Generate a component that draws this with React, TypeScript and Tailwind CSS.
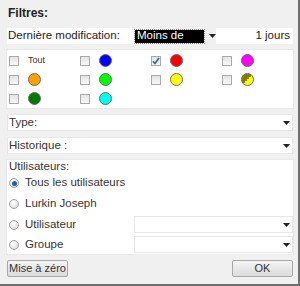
import React from 'react';

const colors: { key: string; cls: string }[][] = [
  [
    { key: 'tout', cls: '' },
    { key: 'blue', cls: 'bg-[#0000ff]' },
    { key: 'red', cls: 'bg-[#ff0000]' },
    { key: 'magenta', cls: 'bg-[#ff00ff]' },
  ],
  [
    { key: 'orange', cls: 'bg-[#ffa000]' },
    { key: 'green', cls: 'bg-[#00ff00]' },
    { key: 'yellow', cls: 'bg-[#ffff00]' },
    { key: 'half', cls: 'bg-[linear-gradient(135deg,#807f00_50%,#ffff00_50%)]' },
  ],
  [
    { key: 'darkgreen', cls: 'bg-[#007a00]' },
    { key: 'cyan', cls: 'bg-[#00ffee]' },
  ],
];

const Check = ({ checked = false }: { checked?: boolean }) => (
  <span className="w-[10px] h-[10px] border border-[#a9a9a9] bg-[linear-gradient(#e4e4e4,#f8f8f8)] flex items-center justify-center shrink-0">
    {checked && (
      <svg width="8" height="8" viewBox="0 0 8 8">
        <path d="M1 4.2 L3 6.5 L7 1" stroke="#2b5fb8" strokeWidth="1.6" fill="none" />
      </svg>
    )}
  </span>
);

const Radio = ({ checked = false }: { checked?: boolean }) => (
  <span className="w-[10px] h-[10px] rounded-full border border-[#a0a0a0] bg-[radial-gradient(circle_at_40%_35%,#ffffff,#d6d6d6)] flex items-center justify-center shrink-0">
    {checked && <span className="w-[5px] h-[5px] rounded-full bg-[#1f5fa8]" />}
  </span>
);

const Arrow = () => (
  <svg width="7" height="4" viewBox="0 0 7 4" className="shrink-0">
    <path d="M0 0 H7 L3.5 4 Z" fill="#222" />
  </svg>
);

const Select = ({ label, className = '' }: { label?: string; className?: string }) => (
  <div className={`h-[17px] bg-white border border-[#e6e6e6] flex items-center pl-[1px] pr-[2px] ${className}`}>
    <span className="flex-1 text-[#333]">{label}</span>
    <Arrow />
  </div>
);

export default function App() {
  return (
    <div className="w-[300px] h-[286px] bg-[#f0f0f0] border-r-2 border-b-2 border-[#6f6f6f] font-['Liberation_Sans',Arial,sans-serif] text-[11.5px] leading-none text-[#222] flex flex-col pl-[7px] pr-[5px]">
      <div className="h-[28px] pt-[7px] pl-[1px] font-bold text-[12px]">Filtres:</div>

      <div className="h-[16px] flex items-stretch">
        <div className="w-[127px] bg-white flex items-center pl-[1px]">Dernière modification:</div>
        <div className="w-[82px] flex items-center pl-[1px] gap-[5px]">
          <div className="w-[69px] h-[13px] bg-black text-white flex items-center pl-[2px] outline-1 outline-dotted outline-[#888]">Moins de</div>
          <Arrow />
        </div>
        <div className="flex-1 bg-white flex items-center justify-end pr-[3px]">1 jours</div>
      </div>

      <div className="mt-[6px] h-[58px] bg-white shadow-[0_0_0_1px_#e8e8e8] pt-[1px] flex flex-col">
        {colors.map((row, i) => (
          <div key={i} className="h-[19px] flex items-center">
            {row.map((c, j) => (
              <div key={c.key} className="w-[71px] flex items-center pl-[2px] gap-[9px]">
                <Check checked={i === 0 && j === 2} />
                {c.key === 'tout' ? (
                  <span className="text-[9px] text-[#333]">Tout</span>
                ) : (
                  <span className={`w-[13px] h-[13px] rounded-full border border-[#6a6a6a] ${c.cls}`} />
                )}
              </div>
            ))}
          </div>
        ))}
      </div>

      <Select label="Type:" className="mt-[6px]" />
      <Select label="Historique :" className="mt-[6px]" />

      <div className="mt-[6px] h-[94px] bg-white shadow-[0_0_0_1px_#e8e8e8] flex flex-col pl-[2px] text-[#333]">
        <div className="h-[15px] pt-[1px]">Utilisateurs:</div>
        <div className="h-[16px] flex items-center gap-[6px]">
          <Radio checked />
          <span>Tous les utilisateurs</span>
        </div>
        <div className="h-[25px] flex items-center gap-[6px]">
          <Radio />
          <span>Lurkin Joseph</span>
        </div>
        <div className="h-[17px] flex items-center">
          <div className="w-[125px] flex items-center gap-[6px]">
            <Radio />
            <span>Utilisateur</span>
          </div>
          <Select className="flex-1" />
        </div>
        <div className="mt-[3px] h-[17px] flex items-center">
          <div className="w-[125px] flex items-center gap-[6px]">
            <Radio />
            <span>Groupe</span>
          </div>
          <Select className="flex-1" />
        </div>
      </div>

      <div className="mt-[6px] flex justify-between">
        <button className="w-[61px] h-[17px] border border-[#a8a8a8] rounded-[2px] bg-[linear-gradient(#f4f4f4,#dcdcdc)] text-[11px] text-[#333]">Mise à zéro</button>
        <button className="w-[61px] h-[17px] border border-[#a8a8a8] rounded-[2px] bg-[linear-gradient(#f4f4f4,#dcdcdc)] text-[11px] text-[#333]">OK</button>
      </div>
    </div>
  );
}
